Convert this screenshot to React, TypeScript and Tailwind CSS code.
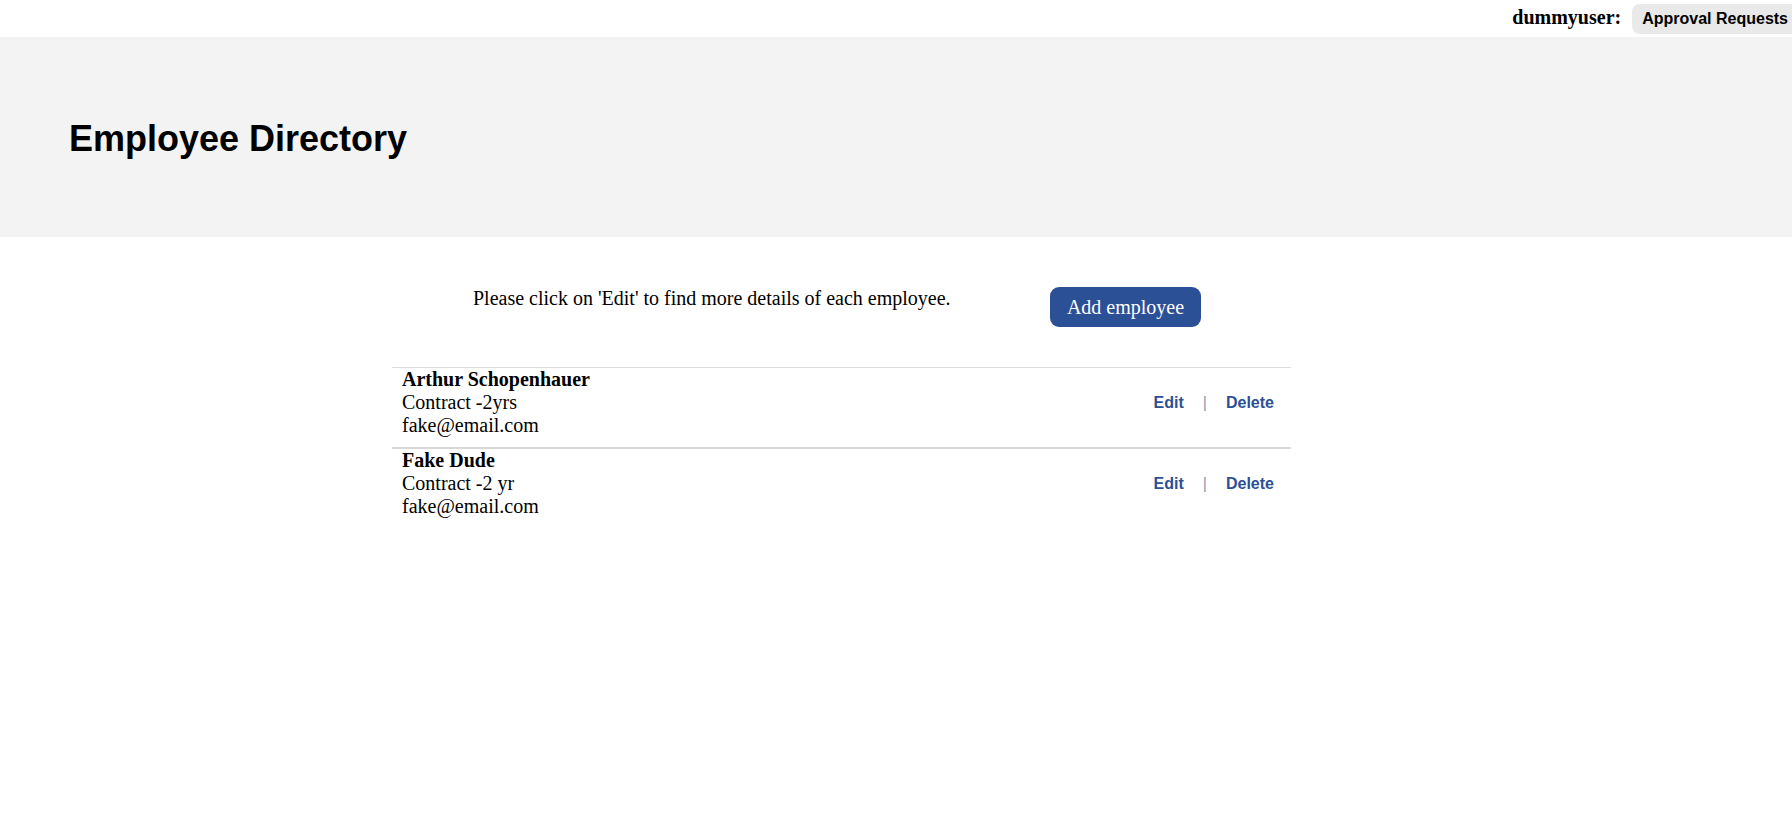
import React from "react";

const employees = [
  { name: "Arthur Schopenhauer", contract: "Contract -2yrs", email: "fake@email.com" },
  { name: "Fake Dude", contract: "Contract -2 yr", email: "fake@email.com" },
];

export default function App() {
  return (
    <div className="min-h-screen bg-white text-black font-['Liberation_Serif','Times_New_Roman',serif] overflow-hidden">
      {/* Top bar */}
      <div className="h-[37px] pt-[2px] flex justify-end items-baseline overflow-hidden">
        <span className="text-[20px] font-bold mr-[11px]">dummyuser:</span>
        <button className="h-[30px] px-[10px] mr-[-6px] rounded-[8px] bg-[#e9e9e9] text-[16px] font-bold font-['Liberation_Sans',Arial,sans-serif] text-black">
          Approval Requests
        </button>
      </div>

      {/* Header band */}
      <div className="h-[200px] bg-[#f3f3f3] flex items-center pl-[69px] pt-[4px]">
        <h1 className="text-[36px] leading-[42px] font-bold font-['Liberation_Sans',Arial,sans-serif]">
          Employee Directory
        </h1>
      </div>

      {/* Content */}
      <div className="ml-[392px] w-[899px]">
        <div className="mt-[50px] flex items-start">
          <p className="ml-[81px] text-[20px] leading-[23px]">
            Please click on 'Edit' to find more details of each employee.
          </p>
          <button className="ml-auto mr-[90px] w-[151px] h-[40px] rounded-[9px] bg-[#2c5096] text-white text-[20px] leading-[23px]">
            Add employee
          </button>
        </div>

        <div className="mt-[40px] border-t border-[#dcdcdc]">
          {employees.map((e, i) => (
            <div
              key={i}
              className={i < employees.length - 1 ? "pb-[10px] border-b-2 border-[#d8d8d8]" : ""}
            >
              <div className="flex items-center justify-between pl-[10px] pr-[17px]">
                <div className="text-[20px] leading-[23px]">
                  <div className="font-bold">{e.name}</div>
                  <div>{e.contract}</div>
                  <div>{e.email}</div>
                </div>
                <div className="flex items-center text-[16px] font-bold font-['Liberation_Sans',Arial,sans-serif] text-[#2c5096]">
                  <a href="#" className="cursor-pointer">Edit</a>
                  <span className="mx-[19px] font-normal text-[#8d9cb3]">|</span>
                  <a href="#" className="cursor-pointer">Delete</a>
                </div>
              </div>
            </div>
          ))}
        </div>
      </div>
    </div>
  );
}
